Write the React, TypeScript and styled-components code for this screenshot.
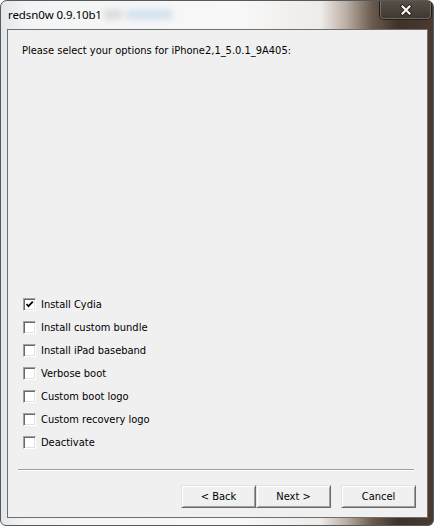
import React from "react";
import styled, { createGlobalStyle } from "styled-components";

const Global = createGlobalStyle`
  html, body { margin: 0; padding: 0; background: #ffffff; }
  * { box-sizing: border-box; }
`;

const Frame = styled.div`
  width: 434px;
  height: 526px;
  border: 1px solid #555a5e;
  border-radius: 7px 7px 6px 6px;
  background: linear-gradient(
    to right,
    #e4e7ea 0%,
    #f3f4f5 6%,
    #f8f8f8 55%,
    #eeebe8 74%,
    #b9ada3 80%,
    #6b5a4d 86%,
    #3f322a 92%,
    #4b3a30 100%
  );
  display: flex;
  flex-direction: column;
  padding: 0 5px 7px 6px;
  overflow: hidden;
`;

const TitleBar = styled.div`
  height: 28px;
  display: flex;
  align-items: flex-start;
  margin-right: -4px;
`;

const TitleText = styled.div`
  margin-top: 6px;
  margin-left: 1px;
  font-family: "Noto Sans", "Open Sans", sans-serif;
  font-size: 11.5px;
  letter-spacing: -0.1px;
  line-height: 16px;
  color: #000;
  white-space: nowrap;
`;

const GlassBlur = styled.div<{ $w: number; $c: string; $ml: number }>`
  margin-top: 9px;
  margin-left: ${(p) => p.$ml}px;
  width: ${(p) => p.$w}px;
  height: 9px;
  background: ${(p) => p.$c};
  filter: blur(3px);
  opacity: 0.6;
`;

const Grow = styled.div`
  flex: 1;
`;

const CloseButton = styled.div`
  width: 53px;
  height: 20px;
  margin-top: -1px;
  border: 1px solid rgba(20, 16, 12, 0.75);
  border-top: none;
  border-radius: 0 0 5px 5px;
  background: linear-gradient(to bottom, #5a5048 0%, #4a4139 60%, #3e362f 100%);
  box-shadow: inset 0 -1px 0 rgba(255, 255, 255, 0.25),
    inset 1px 0 0 rgba(255, 255, 255, 0.22),
    inset -1px 0 0 rgba(255, 255, 255, 0.22);
  display: flex;
  align-items: center;
  justify-content: center;
`;

const Client = styled.div`
  flex: 1;
  border: 1px solid #6e6e6e;
  background: #f0f0f0;
  display: flex;
  flex-direction: column;
  font-family: "DejaVu Sans Condensed", "DejaVu Sans", sans-serif;
  font-stretch: condensed;
  font-size: 11px;
  color: #000;
`;

const Prompt = styled.div`
  padding: 14px 14px 0 14px;
  line-height: 13px;
`;

const Options = styled.div`
  margin-top: auto;
  padding-left: 15px;
  display: flex;
  flex-direction: column;
`;

const OptionRow = styled.label`
  height: 23px;
  display: flex;
  align-items: center;
  gap: 5px;
  line-height: 13px;
`;

const CheckBox = styled.span`
  width: 13px;
  height: 13px;
  border: 1px solid;
  border-color: #a0a0a0 #ffffff #ffffff #a0a0a0;
  box-shadow: inset 1px 1px 0 #696969, inset -1px -1px 0 #e3e3e3;
  background: #ffffff;
  display: flex;
  align-items: center;
  justify-content: center;
  flex: none;
`;

const Separator = styled.div`
  margin: 15px 13px 0 10px;
  height: 2px;
  border-top: 1px solid #a0a0a0;
  border-bottom: 1px solid #ffffff;
`;

const ButtonRow = styled.div`
  display: flex;
  justify-content: flex-end;
  padding: 14px 11px 9px 0;
`;

const Button = styled.button<{ $gap?: number }>`
  width: 75px;
  height: 23px;
  margin-left: ${(p) => p.$gap ?? 0}px;
  padding: 0;
  border: 1px solid;
  border-color: #e3e3e3 #696969 #696969 #e3e3e3;
  box-shadow: inset 1px 1px 0 #ffffff, inset -1px -1px 0 #a0a0a0;
  background: #f0f0f0;
  font-family: "DejaVu Sans Condensed", "DejaVu Sans", sans-serif;
  font-stretch: condensed;
  font-size: 11px;
  color: #000;
`;

const Check = () => (
  <svg width="9" height="9" viewBox="0 0 9 9">
    <path d="M1.5 4 L3.5 6.2 L7.8 1.6" fill="none" stroke="#000" strokeWidth="1.7" />
  </svg>
);

const CloseX = () => (
  <svg width="14" height="12" viewBox="0 0 14 12">
    <path d="M3.5 2.5 L10.5 9.5 M10.5 2.5 L3.5 9.5" stroke="#2a2420" strokeWidth="4" strokeLinecap="square" />
    <path d="M3.5 2.5 L10.5 9.5 M10.5 2.5 L3.5 9.5" stroke="#ffffff" strokeWidth="2" strokeLinecap="square" />
  </svg>
);

const options = [
  { label: "Install Cydia", checked: true },
  { label: "Install custom bundle", checked: false },
  { label: "Install iPad baseband", checked: false },
  { label: "Verbose boot", checked: false },
  { label: "Custom boot logo", checked: false },
  { label: "Custom recovery logo", checked: false },
  { label: "Deactivate", checked: false },
];

export default function App() {
  return (
    <>
      <Global />
      <Frame>
        <TitleBar>
          <TitleText>redsn0w 0.9.10b1</TitleText>
          <GlassBlur $w={18} $c="#c8c8c8" $ml={2} />
          <GlassBlur $w={46} $c="#b7d3e8" $ml={4} />
          <Grow />
          <CloseButton>
            <CloseX />
          </CloseButton>
        </TitleBar>
        <Client>
          <Prompt>Please select your options for iPhone2,1_5.0.1_9A405:</Prompt>
          <Options>
            {options.map((o) => (
              <OptionRow key={o.label}>
                <CheckBox>{o.checked && <Check />}</CheckBox>
                {o.label}
              </OptionRow>
            ))}
          </Options>
          <Separator />
          <ButtonRow>
            <Button>&lt; Back</Button>
            <Button>Next &gt;</Button>
            <Button $gap={10}>Cancel</Button>
          </ButtonRow>
        </Client>
      </Frame>
    </>
  );
}
